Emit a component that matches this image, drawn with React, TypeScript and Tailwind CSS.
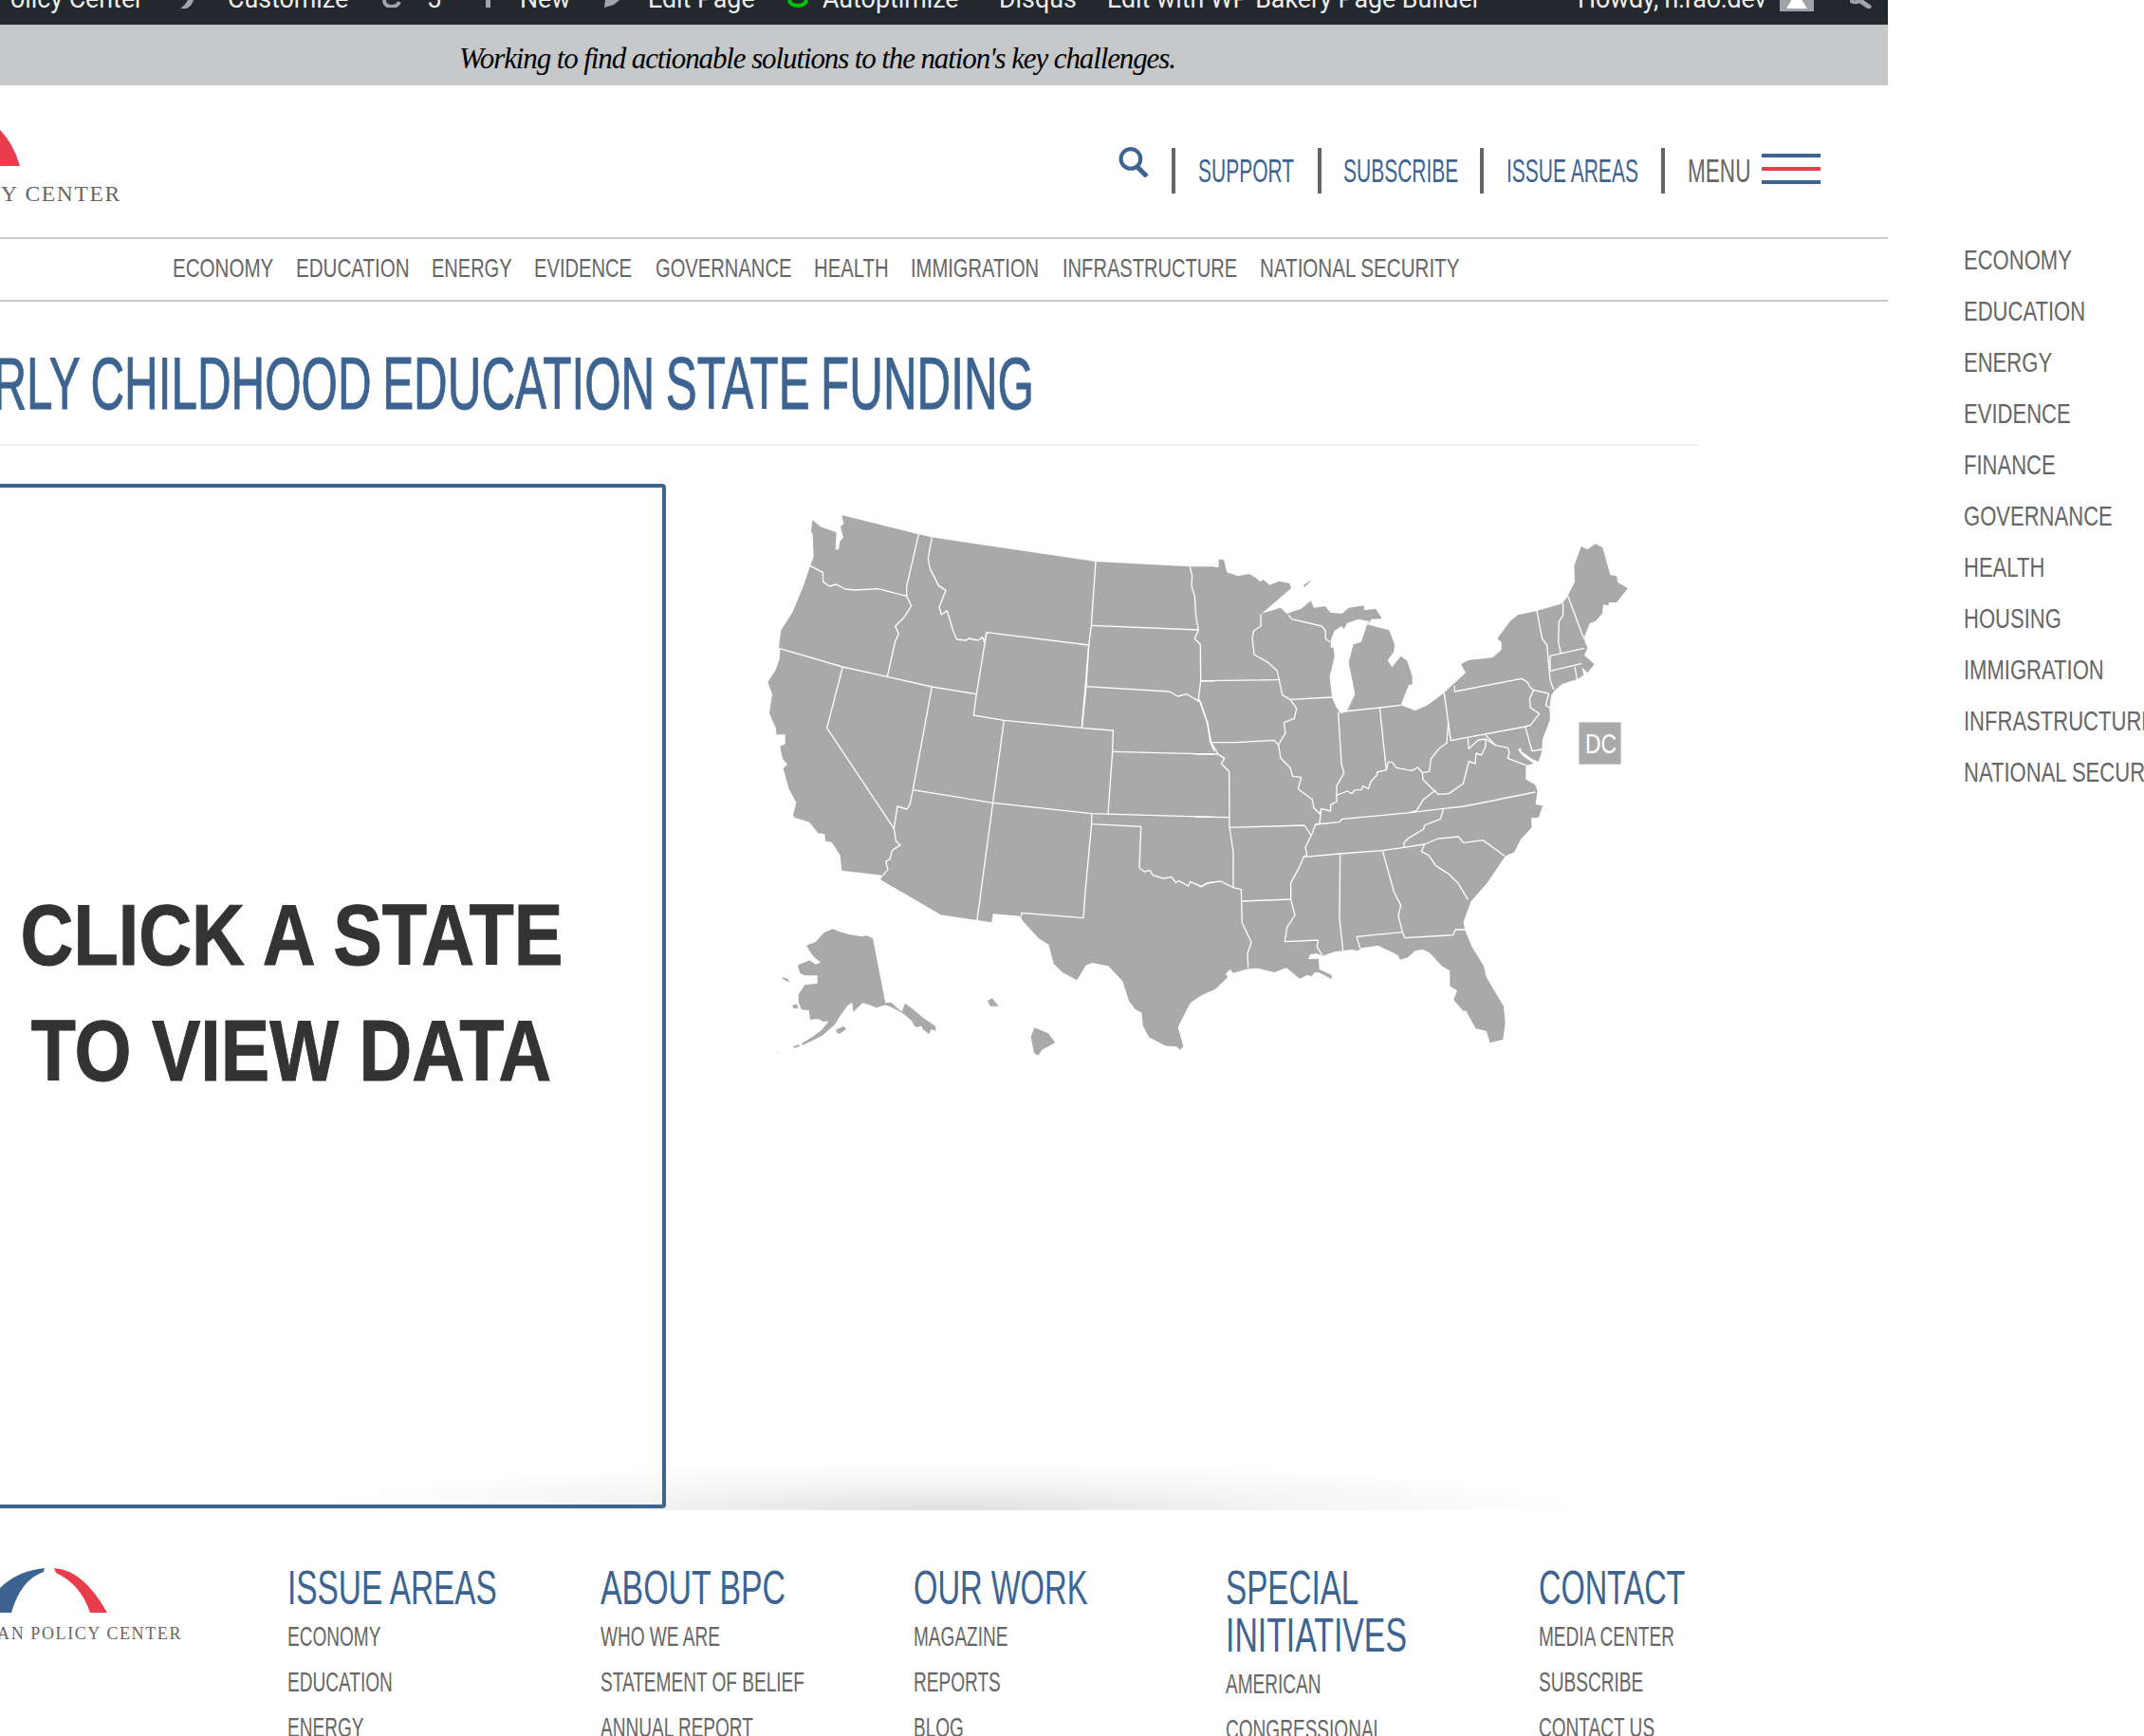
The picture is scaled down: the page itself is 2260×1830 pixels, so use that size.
import React from "react";

const N = "block origin-left whitespace-nowrap";

function C({ w, s, children }: { w: string; s: string; children: React.ReactNode }) {
  return (
    <span className={`block shrink-0 ${w}`}>
      <span className={`${N} ${s}`}>{children}</span>
    </span>
  );
}

const WEST_LAND =
  "M229,84 L255,106 L305,124 L302,178 L312,178 L316,152 L327,140 L318,105 L328,97 L322,69 L565,130 L606,139 L1125,216 L1423,232 L1500,232 L1500,1260 L510,1260 L445,1222 L452,1208 L322,1193 L317,1145 L290,1103 L270,1100 L268,1078 L247,1075 L220,1040 L172,1025 L168,1018 L178,978 L155,935 L137,870 L150,857 L135,840 L127,800 L143,793 L143,763 L115,763 L114,745 L93,695 L102,635 L88,597 L112,560 L125,525 L127,495 L123,488 L130,433 L167,375 L200,295 L222,230 L233,200 L230,130 L225,120 Z";

const WEST_LINES = [
  "M222,229 L262,250 L263,280 L283,294 L305,288 L332,303 L365,306 L436,302 L527,325",
  "M565,130 L527,295 L527,325 L542,356 L519,392 L491,420 L502,445 L491,468 L466,580",
  "M607,140 L595,205 L600,235 L628,292 L651,307 L630,360 L637,384 L655,371 L675,438 L686,462 L715,465 L722,459 L753,465 L767,455 L773,470",
  "M773,470 L780,440 L1103,480 L1081,742",
  "M780,440 L748,635 L739,702 L835,718 L1081,742 L1180,750 L1178,817 L1164,1014",
  "M835,718 L800,978 L762,1260",
  "M1125,216 L1111,418 L1103,480 L1095,611 L1081,742",
  "M1111,418 L1450,432",
  "M1423,232 L1430,262 L1428,292 L1438,325 L1442,390 L1450,432 L1438,460 L1456,478 L1457,594 L1450,650 L1456,660",
  "M1095,611 L1358,627 L1385,642 L1412,635 L1456,660 L1478,725 L1487,785 L1500,815",
  "M1457,594 L1500,594",
  "M123,490 L325,549 L466,580 L607,612 L748,635",
  "M325,549 L275,742 L487,1060 L498,990 L528,999 L537,985 L547,938 L607,612",
  "M547,938 L800,979 L1112,1013 L1500,1024",
  "M1112,1013 L1112,1046 L1268,1054 L1263,1184 L1279,1197 L1296,1192 L1306,1208 L1340,1218 L1365,1213 L1378,1232 L1387,1225 L1418,1242 L1424,1228 L1458,1243 L1478,1233 L1500,1230",
  "M1112,1046 L1092,1260",
  "M1178,817 L1500,825",
  "M487,1060 L494,1102 L507,1112 L481,1130 L474,1157 L461,1165 L468,1190 L452,1208",
];

const SW_LAND =
  "M445,382 L635,493 L750,510 L796,517 L800,490 L888,497 L892,510 L945,568 L977,588 L992,648 L1020,675 L1065,700 L1095,652 L1115,645 L1165,655 L1210,703 L1230,765 L1250,792 L1270,802 L1274,842 L1293,880 L1345,907 L1380,910 L1392,920 L1402,908 L1385,848 L1423,773 L1460,745 L1500,730 L1500,300 L500,300 Z";
const SW_LINES = ["M762,420 L750,510", "M1092,420 L1086,503 L890,487 L890,497"];

const ALASKA = [
  "M293,538 L320,548 L345,555 L385,562 L400,558 L420,568 L460,772 L478,770 L512,800 L522,773 L545,790 L575,815 L618,845 L620,860 L605,855 L598,870 L578,855 L575,845 L555,848 L540,825 L515,805 L480,785 L460,778 L432,787 L410,778 L388,772 L358,800 L355,770 L340,780 L315,815 L300,840 L260,875 L230,890 L198,905 L195,900 L228,880 L258,858 L280,830 L262,830 L248,822 L222,825 L218,795 L195,793 L185,770 L185,745 L205,715 L245,710 L245,685 L205,685 L190,678 L183,652 L220,637 L240,650 L255,643 L238,630 L225,615 L210,590 L240,578 L265,550 Z",
  "M133,690 L150,695 L157,706 L147,703 L135,695 Z",
  "M165,780 L180,775 L185,788 L170,790 Z",
  "M305,855 L330,845 L335,855 L315,870 L305,865 Z",
  "M168,910 L188,903 L188,910 L172,914 Z",
  "M117,928 L123,928 L120,931 Z",
  "M783,765 L798,757 L818,782 L792,782 Z",
  "M931,850 L975,868 L997,897 L955,920 L943,938 L930,930 L920,880 Z",
];

const EAST_LAND =
  "M0,234 L74,234 L74,209 L90,210 L100,250 L135,262 L170,255 L192,268 L205,280 L215,273 L235,290 L265,278 L298,285 L303,300 L210,380 L270,362 L290,382 L305,375 L335,365 L365,340 L375,362 L410,357 L428,378 L465,380 L485,362 L533,355 L535,370 L570,365 L590,396 L555,398 L553,408 L543,415 L613,433 L630,478 L628,500 L608,528 L622,550 L650,515 L670,530 L686,580 L686,605 L675,605 L650,670 L695,687 L735,670 L785,632 L855,568 L840,540 L865,527 L940,520 L968,495 L968,470 L955,460 L995,405 L1020,385 L1080,372 L1160,349 L1178,325 L1200,280 L1198,230 L1220,168 L1240,178 L1265,160 L1288,172 L1312,258 L1332,262 L1336,282 L1368,300 L1332,345 L1308,345 L1306,355 L1290,352 L1287,380 L1265,405 L1248,410 L1228,458 L1240,490 L1230,512 L1262,540 L1240,568 L1222,550 L1228,575 L1208,588 L1160,603 L1135,625 L1125,640 L1120,680 L1122,715 L1098,778 L1095,820 L1085,848 L1065,840 L1030,815 L1030,805 L1020,810 L1035,830 L1070,855 L1045,860 L1045,905 L1075,922 L1082,942 L1075,985 L1098,988 L1085,1025 L1062,1027 L1063,1057 L1028,1095 L1008,1135 L980,1147 L920,1235 L895,1260 L0,1260 Z";

const LAKE =
  "M428,465 L440,435 L462,420 L470,430 L480,410 L516,398 L552,405 L543,415 L525,470 L500,478 L485,535 L505,635 L480,688 L460,697 L445,675 L432,645 L425,580 L440,515 L437,488 L428,488 Z";

const EAST_LINES = [
  "M295,385 L305,398 L400,420 L412,435 L412,460 L425,470",
  "M207,382 L207,420 L185,435 L180,458 L186,510 L230,535 L258,560 L265,590 L275,638 L300,652 L320,680 L313,712 L280,725 L285,758 L263,795",
  "M18,593 L263,590",
  "M50,788 L130,788 L248,781 L263,795",
  "M0,652 L15,660 L38,725 L50,788 L72,825 L92,838 L82,855 L107,880 L108,1055",
  "M0,825 L72,825",
  "M0,1023 L108,1025",
  "M108,1057 L345,1050 L365,1080",
  "M300,652 L432,645",
  "M452,692 L462,855 L470,885 L447,925 L447,975 L428,985 L428,1005 L398,997 L393,1045",
  "M263,795 L270,838 L300,868 L308,895 L335,898 L325,935 L370,968 L375,995 L395,1015 L398,997",
  "M470,690 L583,678 L650,670",
  "M583,678 L604,875",
  "M447,955 L480,942 L495,950 L505,938 L525,938 L530,925 L547,935 L555,912 L575,890 L575,882 L604,875 L610,850 L622,850 L636,868 L685,877 L703,867 L718,883 L740,880 L745,840 L770,808 L795,790 L800,725 L787,632",
  "M820,608 L820,627 L1032,586 L1050,597 L1060,615 L1070,622 L1118,633",
  "M1070,622 L1057,650 L1060,678 L1088,697 L1060,733 L1043,738 L808,782 L800,725",
  "M1118,633 L1108,670 L1122,680",
  "M1043,738 L1065,815 L1095,810",
  "M1080,372 L1097,460 L1112,480 L1122,590 L1133,620",
  "M1163,349 L1163,385 L1150,405 L1148,470 L1156,505",
  "M1178,325 L1228,458",
  "M1122,514 L1230,490",
  "M1122,562 L1222,538",
  "M1200,548 L1207,588",
  "M1122,514 L1122,562",
  "M862,775 L865,808 L895,780 L918,777 L918,800 L905,828 L888,822 L885,855 L865,848 L847,918 L802,950 L768,952 L750,935 L720,905 L718,883",
  "M918,765 L950,797 L988,805 L993,820 L988,838 L1045,860",
  "M918,777 L950,797",
  "M1075,945 L850,990 L785,997 L680,1010 L465,1030 L455,1040 L380,1047 L370,1075 L348,1120 L353,1142 L343,1150",
  "M680,1010 L700,1003 L720,970 L760,938",
  "M393,1045 L380,1047",
  "M785,997 L775,1030 L725,1050 L722,1062 L675,1090 L660,1105 L660,1120",
];

const SE_LAND =
  "M0,100 L1080,100 L1075,145 L1098,148 L1085,185 L1062,187 L1063,217 L1028,255 L1008,295 L980,307 L920,395 L872,450 L848,515 L852,540 L875,595 L912,655 L920,690 L975,782 L980,835 L973,887 L932,898 L920,860 L887,853 L855,795 L848,798 L817,762 L828,733 L805,718 L805,670 L780,655 L740,612 L718,602 L695,607 L672,628 L648,635 L640,620 L578,590 L525,598 L515,607 L495,603 L468,606 L440,610 L402,623 L385,615 L363,618 L357,633 L390,632 L392,665 L430,683 L432,697 L390,675 L378,675 L367,688 L355,683 L330,695 L288,660 L250,675 L197,662 L167,664 L145,670 L120,677 L110,665 L95,680 L103,690 L65,727 L25,745 L0,760 Z";

const SE_LINES = [
  "M108,215 L120,295 L120,407 L145,413 L146,450 L148,518 L177,580 L165,615 L167,660",
  "M0,395 L18,405 L40,392 L80,387 L120,407",
  "M146,450 L302,444",
  "M343,310 L325,350 L302,392 L302,444 L315,495 L290,532 L283,578 L388,573 L385,595 L402,622",
  "M458,302 L456,505 L467,606",
  "M343,310 L455,300 L590,290 L660,280 L725,270 L768,252 L832,246 L848,265 L910,257 L978,307",
  "M592,290 L628,420 L650,463 L642,495 L655,548 L663,566 L815,557 L823,540 L852,540",
  "M655,548 L510,562 L522,602",
  "M725,270 L715,293 L738,305 L760,337 L803,365 L830,392 L862,445",
];

function UsMap() {
  const line = "fill-none stroke-white [stroke-width:4] [stroke-linejoin:round]";
  const land = "fill-[#a9a9a9]";
  return (
    <svg viewBox="780 520 980 620" className="ml-[78px] mt-[50px] h-[620px] w-[980px] shrink-0">
      <g transform="translate(780 520) scale(0.33333)">
        <path d={WEST_LAND} className={land} />
      </g>
      <g transform="translate(780 800) scale(0.33333)">
        <path d={SW_LAND} className={land} />
        {ALASKA.map((d) => (
          <path key={d} d={d} className={land} />
        ))}
      </g>
      <g transform="translate(1260 520) scale(0.33333)">
        <path d={EAST_LAND} className={land} />
        <path d="M342,290 L370,272 L345,297 Z" className={land} />
        <path d={LAKE} className="fill-white" />
      </g>
      <g transform="translate(1260 800) scale(0.33333)">
        <path d={SE_LAND} className={land} />
      </g>
      <g transform="translate(780 520) scale(0.33333)">
        {WEST_LINES.map((d) => (
          <path key={d} d={d} className={line} />
        ))}
      </g>
      <g transform="translate(780 800) scale(0.33333)">
        {SW_LINES.map((d) => (
          <path key={d} d={d} className={line} />
        ))}
      </g>
      <g transform="translate(1260 520) scale(0.33333)">
        {EAST_LINES.map((d) => (
          <path key={d} d={d} className={line} />
        ))}
      </g>
      <g transform="translate(1260 800) scale(0.33333)">
        {SE_LINES.map((d) => (
          <path key={d} d={d} className={line} />
        ))}
      </g>
      <rect x="1664.5" y="761.5" width="44" height="44" className="fill-[#a9a9a9] stroke-[#ccc]" />
      <text x="1671" y="794" textLength={33} lengthAdjust="spacingAndGlyphs" className="fill-white text-[30px]">
        DC
      </text>
    </svg>
  );
}

function AdminText({ className, children }: { className: string; children: React.ReactNode }) {
  return (
    <span className={`-mt-[14px] block shrink-0 whitespace-nowrap font-['Roboto',sans-serif] text-[26.8px] leading-[26px] text-[#eee] ${className}`}>
      {children}
    </span>
  );
}

function AdminBar() {
  const icon = "shrink-0";
  return (
    <div className="flex h-[26px] items-start overflow-hidden bg-[#23282d]">
      <AdminText className="ml-[11px] w-[143px]">olicy Center</AdminText>
      <svg viewBox="0 0 14 10" className={`ml-[36px] h-[10px] w-[14px] ${icon}`}>
        <path d="M8,0 L14,0 C13,4 10,8 6,9 L0,9 C3,7 6,4 8,0 Z" fill="#a0a5aa" />
      </svg>
      <AdminText className="ml-[36px] w-[126px]">Customize</AdminText>
      <svg viewBox="0 0 20 8" className={`ml-[37px] h-[8px] w-[20px] ${icon}`}>
        <path d="M2,0 C2,9 15,9 18,2" fill="none" stroke="#a0a5aa" strokeWidth="4" />
      </svg>
      <AdminText className="ml-[27px] w-[14px]">5</AdminText>
      <svg viewBox="0 0 8 8" className={`ml-[48px] h-[8px] w-[8px] ${icon}`}>
        <rect x="0" y="0" width="5" height="8" fill="#a0a5aa" />
      </svg>
      <AdminText className="ml-[28px] w-[50px]">New</AdminText>
      <svg viewBox="0 0 16 8" className={`ml-[39px] h-[8px] w-[16px] ${icon}`}>
        <path d="M1,0 L16,0 L10,5 L0,8 Z" fill="#a0a5aa" />
      </svg>
      <AdminText className="ml-[30px] w-[114px]">Edit Page</AdminText>
      <svg viewBox="0 0 22 8" className={`ml-[33px] h-[8px] w-[22px] ${icon}`}>
        <path d="M2,0 C3,8 19,8 20,0" fill="none" stroke="#00c800" strokeWidth="4" />
      </svg>
      <AdminText className="ml-[15px] w-[143px]">Autoptimize</AdminText>
      <AdminText className="ml-[43px] w-[86px]">Disqus</AdminText>
      <AdminText className="ml-[28px] w-[392px]">Edit with WP Bakery Page Builder</AdminText>
      <AdminText className="ml-[104px] w-[199px] tracking-[-0.2px]">Howdy, n.rao.dev</AdminText>
      <div className="ml-[14px] flex h-[12px] w-[36px] shrink-0 justify-center border-x-[3px] border-b-[3px] border-[#9ea3a8] bg-[#9ea3a8]">
        <div className="h-[9px] w-[22px] [clip-path:polygon(25%_0,75%_0,100%_100%,0_100%)] bg-white" />
      </div>
      <svg viewBox="0 0 23 9" className={`ml-[38px] h-[9px] w-[23px] ${icon}`} fill="none" stroke="#a0a5aa" strokeLinecap="round">
        <path d="M0,0 C3,3 8,3 11,0" strokeWidth="4" />
        <path d="M11,1 L20,7" strokeWidth="5" />
      </svg>
    </div>
  );
}

function Sep() {
  return <div className="mt-[66px] h-[48px] w-1 shrink-0 bg-[#666]" />;
}

function Header() {
  const link = "mt-[66px] text-[35px] leading-[48px] text-[#3d6491]";
  return (
    <div className="flex h-[162px] items-start border-b-2 border-[#ccc]">
      <div className="w-[128px] shrink-0">
        <svg viewBox="0 0 21 38" className="mt-[47px] h-[38px] w-[21px]">
          <path d="M0,0 Q14,14 21,38 L0,38 Z" fill="#e93c4d" />
        </svg>
        <div className="mt-[19px] flex h-[20px] w-[128px] justify-end overflow-hidden font-['Liberation_Serif',serif] text-[23.5px] leading-[20px] tracking-[1.7px] whitespace-nowrap text-[#666]">
          BIPARTISAN POLICY CENTER
        </div>
      </div>
      <svg viewBox="0 0 32 31" className="mt-[65px] ml-[1051px] h-[32px] w-[33px] shrink-0" fill="none" stroke="#3d6491" strokeWidth="4">
        <circle cx="12.5" cy="12" r="10" />
        <path d="M19,20 L29,30" strokeWidth="5" />
      </svg>
      <div className="ml-[23px]"><Sep /></div>
      <div className={`ml-[24px] ${link}`}><C w="w-[101px]" s="scale-x-[0.6]">SUPPORT</C></div>
      <div className="ml-[25px]"><Sep /></div>
      <div className={`ml-[23px] ${link}`}><C w="w-[119px]" s="scale-x-[0.6]">SUBSCRIBE</C></div>
      <div className="ml-[25px]"><Sep /></div>
      <div className={`ml-[24px] ${link}`}><C w="w-[138px]" s="scale-x-[0.6]">ISSUE AREAS</C></div>
      <div className="ml-[25px]"><Sep /></div>
      <div className="mt-[66px] ml-[24px] text-[35px] leading-[48px] text-[#666]"><C w="w-[66px]" s="scale-x-[0.645]">MENU</C></div>
      <div className="mt-[72px] ml-[12px] flex w-[62px] shrink-0 flex-col gap-[10px]">
        <div className="h-1 bg-[#3d6491]" />
        <div className="h-1 bg-[#e93c4d]" />
        <div className="h-1 bg-[#3d6491]" />
      </div>
    </div>
  );
}

function Nav() {
  const items: [string, string, string][] = [
    ["ECONOMY", "w-[106px]", "scale-x-[0.735]"],
    ["EDUCATION", "w-[119px]", "scale-x-[0.735]"],
    ["ENERGY", "w-[84px]", "scale-x-[0.715]"],
    ["EVIDENCE", "w-[104px]", "scale-x-[0.72]"],
    ["GOVERNANCE", "w-[143px]", "scale-x-[0.72]"],
    ["HEALTH", "w-[78px]", "scale-x-[0.725]"],
    ["IMMIGRATION", "w-[136px]", "scale-x-[0.72]"],
    ["INFRASTRUCTURE", "w-[184px]", "scale-x-[0.718]"],
    ["NATIONAL SECURITY", "w-[210px]", "scale-x-[0.735]"],
  ];
  return (
    <div className="flex h-[66px] items-center gap-6 border-b-2 border-[#ccc] pb-[2px] pl-[182px] text-[28px] leading-[36px] text-[#666]">
      {items.map(([t, w, s]) => (
        <C key={t} w={w} s={s}>{t}</C>
      ))}
    </div>
  );
}

function Title() {
  return (
    <div className="w-[1790px] border-b-2 border-[#eee]">
      <div className="flex h-[150px] w-[1090px] items-center justify-end overflow-hidden pt-[21px]">
        <h1 className="shrink-0 origin-right scale-x-[0.633] whitespace-nowrap text-[78px] leading-[80px] font-normal text-[#3d6491] [word-spacing:-3.5px] [-webkit-text-stroke:1px_#3d6491]">
          EARLY CHILDHOOD EDUCATION STATE FUNDING
        </h1>
      </div>
    </div>
  );
}

function Main() {
  return (
    <div className="relative flex h-[1122px] items-start">
      <div className="pointer-events-none absolute bottom-0 left-[300px] h-[52px] w-[1400px] bg-[radial-gradient(ellipse_at_50%_100%,#e0e0e0_0%,#f4f4f4_35%,#ffffff00_70%)]" />
      <div className="relative mt-10 -ml-[88px] flex h-[1080px] w-[790px] shrink-0 flex-col items-center justify-center rounded border-4 border-[#3d6491]">
        <div className="-mt-[6px] flex flex-col items-center text-[90px] leading-[122px] font-bold text-[#333] [-webkit-text-stroke:1px_#333]">
          <span className="scale-x-[0.86] whitespace-nowrap">CLICK A STATE</span>
          <span className="scale-x-[0.857] whitespace-nowrap">TO VIEW DATA</span>
        </div>
      </div>
      <UsMap />
    </div>
  );
}

function FootCol({ heads, items }: { heads: [string, string][]; items: string[] }) {
  return (
    <div className="w-[329.8px] shrink-0">
      <div className="text-[50px] leading-[50px] text-[#3d6491]">
        {heads.map(([t, s]) => (
          <span key={t} className={`${N} ${s}`}>{t}</span>
        ))}
      </div>
      <div className="mt-[1.5px] text-[29px] leading-[48px] text-[#666]">
        {items.map((t) => (
          <span key={t} className={`${N} scale-x-[0.657]`}>{t}</span>
        ))}
      </div>
    </div>
  );
}

function Footer() {
  return (
    <div className="flex flex-1 items-start overflow-hidden pt-[57px]">
      <div className="w-[303px] shrink-0">
        <svg viewBox="0 0 113 47" className="mt-[4px] h-[47px] w-[113px]">
          <path d="M0,21 Q18,3 47,0 L46,4 Q22,12 12,47 L0,47 Z" fill="#3d6491" />
          <path d="M57,0 Q88,2 113,47 L95,47 Q85,17 59,5 Z" fill="#e93c4d" />
        </svg>
        <div className="mt-[13px] flex h-[18px] w-[192px] justify-end overflow-hidden font-['Liberation_Serif',serif] text-[18px] leading-[18px] tracking-[1.6px] whitespace-nowrap text-[#666]">
          BIPARTISAN POLICY CENTER
        </div>
      </div>
      <FootCol heads={[["ISSUE AREAS", "scale-x-[0.668]"]]} items={["ECONOMY", "EDUCATION", "ENERGY"]} />
      <FootCol heads={[["ABOUT BPC", "scale-x-[0.677]"]]} items={["WHO WE ARE", "STATEMENT OF BELIEF", "ANNUAL REPORT"]} />
      <FootCol heads={[["OUR WORK", "scale-x-[0.654]"]]} items={["MAGAZINE", "REPORTS", "BLOG"]} />
      <FootCol heads={[["SPECIAL", "scale-x-[0.664]"], ["INITIATIVES", "scale-x-[0.676]"]]} items={["AMERICAN", "CONGRESSIONAL"]} />
      <FootCol heads={[["CONTACT", "scale-x-[0.649]"]]} items={["MEDIA CENTER", "SUBSCRIBE", "CONTACT US"]} />
    </div>
  );
}

function SideMenu() {
  const items = ["ECONOMY", "EDUCATION", "ENERGY", "EVIDENCE", "FINANCE", "GOVERNANCE", "HEALTH", "HOUSING", "IMMIGRATION", "INFRASTRUCTURE", "NATIONAL SECURITY"];
  return (
    <div className="flex-1 pt-[247px] pl-[80px] text-[29px] leading-[54px] text-[#666]">
      {items.map((t) => (
        <span key={t} className={`${N} scale-x-[0.76]`}>{t}</span>
      ))}
    </div>
  );
}

export default function App() {
  return (
    <div className="flex h-[1830px] w-[2260px] overflow-hidden bg-white font-['Liberation_Sans',sans-serif]">
      <div className="flex h-full w-[1990px] shrink-0 flex-col">
        <AdminBar />
        <div className="flex h-[64px] items-center bg-[#c6c7c9] pt-[8px] pl-[484px] font-['Liberation_Serif',serif] text-[31px] tracking-[-1.11px] whitespace-nowrap text-black italic">
          Working to find actionable solutions to the nation's key challenges.
        </div>
        <Header />
        <Nav />
        <Title />
        <Main />
        <Footer />
      </div>
      <SideMenu />
    </div>
  );
}
